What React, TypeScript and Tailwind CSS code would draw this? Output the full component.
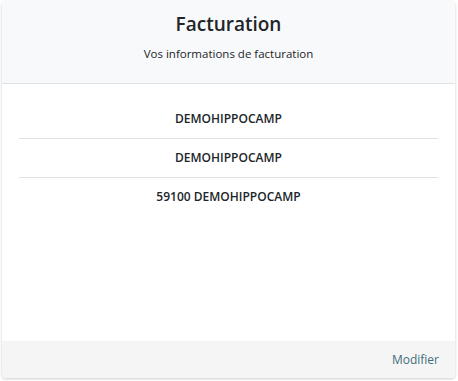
const rows = ['DEMOHIPPOCAMP', 'DEMOHIPPOCAMP', '59100 DEMOHIPPOCAMP'];

export default function App() {
  return (
    <div className="h-[381px] w-[458px] bg-white p-[1px_3px_3px_2px] font-['Open_Sans',sans-serif] text-[#212529]">
      <div className="flex h-[377px] flex-col overflow-hidden rounded-[4px] bg-white shadow-[0_1px_3px_rgba(0,0,0,0.2)]">
        <div className="flex h-[83px] flex-col items-center border-b border-[#dee2e6] bg-[#f8f9fa] pt-[9px]">
          <h3 className="text-[19px] font-semibold leading-[28px]">Facturation</h3>
          <p className="mt-[7px] text-[11.5px] leading-[18px]">Vos informations de facturation</p>
        </div>
        <div className="flex-1 px-[17px] pt-[16px]">
          {rows.map((row, i) => (
            <div
              key={i}
              className={`py-[10px] text-center text-[12px] font-semibold leading-[18px] ${i < rows.length - 1 ? 'border-b border-[#dee2e6]' : ''}`}
            >
              {row}
            </div>
          ))}
        </div>
        <div className="flex h-[37px] items-center justify-end bg-[#f5f5f5] px-[16px]">
          <span className="text-[12px] text-[#3f6e7b]">Modifier</span>
        </div>
      </div>
    </div>
  );
}
